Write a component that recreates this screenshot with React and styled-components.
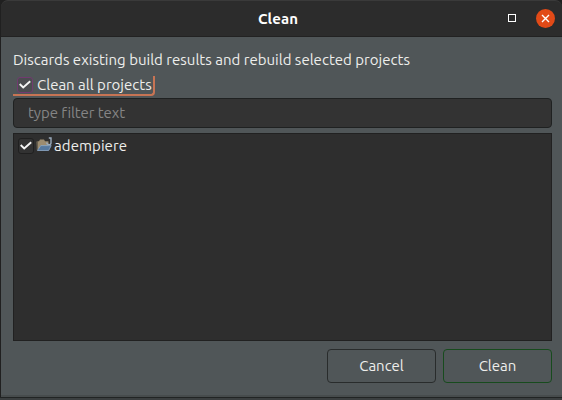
import React from "react";
import styled, { createGlobalStyle } from "styled-components";

const GlobalStyle = createGlobalStyle`
  * { box-sizing: border-box; }
  body { margin: 0; background: #343838; overflow: hidden; }
`;

const Desktop = styled.div`
  width: 562px;
  height: 400px;
  background: linear-gradient(#202020 0, #202020 397px, #3b3f40 398px);
  font: 15px/20px "Ubuntu", "Noto Sans", sans-serif;
  font-variant-ligatures: none;
  color: #eeeeec;
  white-space: nowrap;
`;

const Window = styled.div`
  display: flex;
  flex-direction: column;
  height: 398px;
  padding-left: 1px;
  border-bottom: 1px solid #212424;
`;

const TitleBar = styled.header`
  display: grid;
  grid-template-columns: 1fr auto 1fr;
  align-items: center;
  flex: none;
  height: 37px;
  padding: 0 7px 0 1px;
  background: #2c2c2c;
  border-top: 1px solid #3a3a3a;
  border-bottom: 1px solid #222222;
  border-radius: 7px 7px 0 0;
`;

const Title = styled.h1`
  grid-column: 2;
  margin: 0 1px 0 0;
  font-size: 15px;
  line-height: 20px;
  font-weight: 700;
  letter-spacing: 0.1px;
  color: #ffffff;
`;

const WindowControls = styled.div`
  display: flex;
  justify-content: flex-end;
  align-items: center;
  gap: 20px;
`;

const MaximizeButton = styled.button`
  width: 8px;
  height: 8px;
  margin-top: -1px;
  padding: 0;
  border: 1px solid #ffffff;
  background: transparent;
`;

const CloseButton = styled.button`
  display: flex;
  align-items: center;
  justify-content: center;
  width: 19px;
  height: 19px;
  margin: -1px 0 0 0;
  padding: 0;
  border: 0;
  border-radius: 50%;
  background: #e24a17;
`;

const Body = styled.main`
  display: flex;
  flex-direction: column;
  flex: 1;
  min-height: 0;
  padding: 13px 10px 13px 12px;
  background: #505658;
  border-bottom: 2px solid #474c4d;
`;

const Description = styled.p`
  margin: 0;
  height: 20px;
  letter-spacing: 0.01px;
`;

const CleanAll = styled.label`
  display: flex;
  align-items: center;
  align-self: flex-start;
  width: 142px;
  height: 20px;
  margin: 6px 0 2px;
  padding-left: 4px;
  gap: 4px;
  border-right: 2px solid #c77454;
  border-bottom: 2px solid #c77454;
  border-bottom-right-radius: 4px;
`;

const Box = styled.span`
  display: flex;
  align-items: center;
  justify-content: center;
  flex: none;
  width: 16px;
  height: 16px;
  margin-top: -1px;
  border: 1px solid ${(p) => p.$border};
  border-radius: 3px;
  background: ${(p) => p.$fill};
`;

const Label = styled.span`
  line-height: 18px;
  letter-spacing: ${(p) => p.$spacing || "0"};
`;

const Filter = styled.input`
  flex: none;
  height: 30px;
  padding: 0 14px 2px;
  border: 1px solid #1f2121;
  border-radius: 4px;
  background: #333333;
  color: #eeeeec;
  font: inherit;
  font-variant-ligatures: none;
  letter-spacing: -0.08px;
  outline: none;
  &::placeholder { color: #858585; opacity: 1; }
`;

const ProjectList = styled.div`
  flex: none;
  height: 208px;
  margin-top: 5px;
  padding: 2px 4px;
  border: 1px solid #212121;
  background: #2e2e2e;
`;

const ProjectRow = styled.div`
  display: flex;
  align-items: center;
  height: 20px;
`;

const ProjectIcon = styled.svg`
  flex: none;
  margin: -3px 2px 0 2px;
`;

const Actions = styled.footer`
  display: flex;
  justify-content: flex-end;
  gap: 7px;
  margin-top: 8px;
`;

const ActionButton = styled.button`
  width: 109px;
  height: 34px;
  padding: 0 0 1px;
  border: 1px solid ${(p) => p.$border};
  border-radius: 4px;
  background: #505658;
  color: #eeeeec;
  font: inherit;
`;

function Check() {
  return (
    <svg width="14" height="14" viewBox="0 0 14 14">
      <path d="M1.7 6 5.2 9.4 12.2 3.2" fill="none" stroke="#f4f4f4" strokeWidth="1.9" />
    </svg>
  );
}

function OpenFolder() {
  return (
    <ProjectIcon width="16" height="16" viewBox="0 0 16 16">
      <path d="M1.5 13V4.2H3L4 2.5h4l1 1.7h3.5V9H5z" fill="#9c8c70" />
      <path d="M.3 4.5h1.4v9H.8z" fill="#6b6150" />
      <path d="M1.5 13.5 4.8 8.6h10.4l-2.5 4.9z" fill="#56799f" stroke="#8fa9c6" strokeWidth=".8" />
      <path d="M12.8 1h2.2v5q0 1.6-2 1.6-2.2 0-2.2-2" fill="none" stroke="#9aabbc" strokeWidth="1.4" />
    </ProjectIcon>
  );
}

export default function App() {
  return (
    <Desktop>
      <GlobalStyle />
      <Window>
        <TitleBar>
          <Title>Clean</Title>
          <WindowControls>
            <MaximizeButton aria-label="Maximize" />
            <CloseButton aria-label="Close">
              <svg width="9" height="9" viewBox="0 0 9 9">
                <path d="m1 1 7 7M8 1 1 8" stroke="#fff" strokeWidth="1.4" />
              </svg>
            </CloseButton>
          </WindowControls>
        </TitleBar>
        <Body>
          <Description>Discards existing build results and rebuild selected projects</Description>
          <CleanAll>
            <Box $border="#713b70" $fill="#4b4c50"><Check /></Box>
            <Label>Clean all projects</Label>
          </CleanAll>
          <Filter placeholder="type filter text" />
          <ProjectList>
            <ProjectRow>
              <Box $border="#202020" $fill="#323232"><Check /></Box>
              <OpenFolder />
              <Label $spacing="0.08px">adempiere</Label>
            </ProjectRow>
          </ProjectList>
          <Actions>
            <ActionButton $border="#292c2c">Cancel</ActionButton>
            <ActionButton $border="#174b1d">Clean</ActionButton>
          </Actions>
        </Body>
      </Window>
    </Desktop>
  );
}
